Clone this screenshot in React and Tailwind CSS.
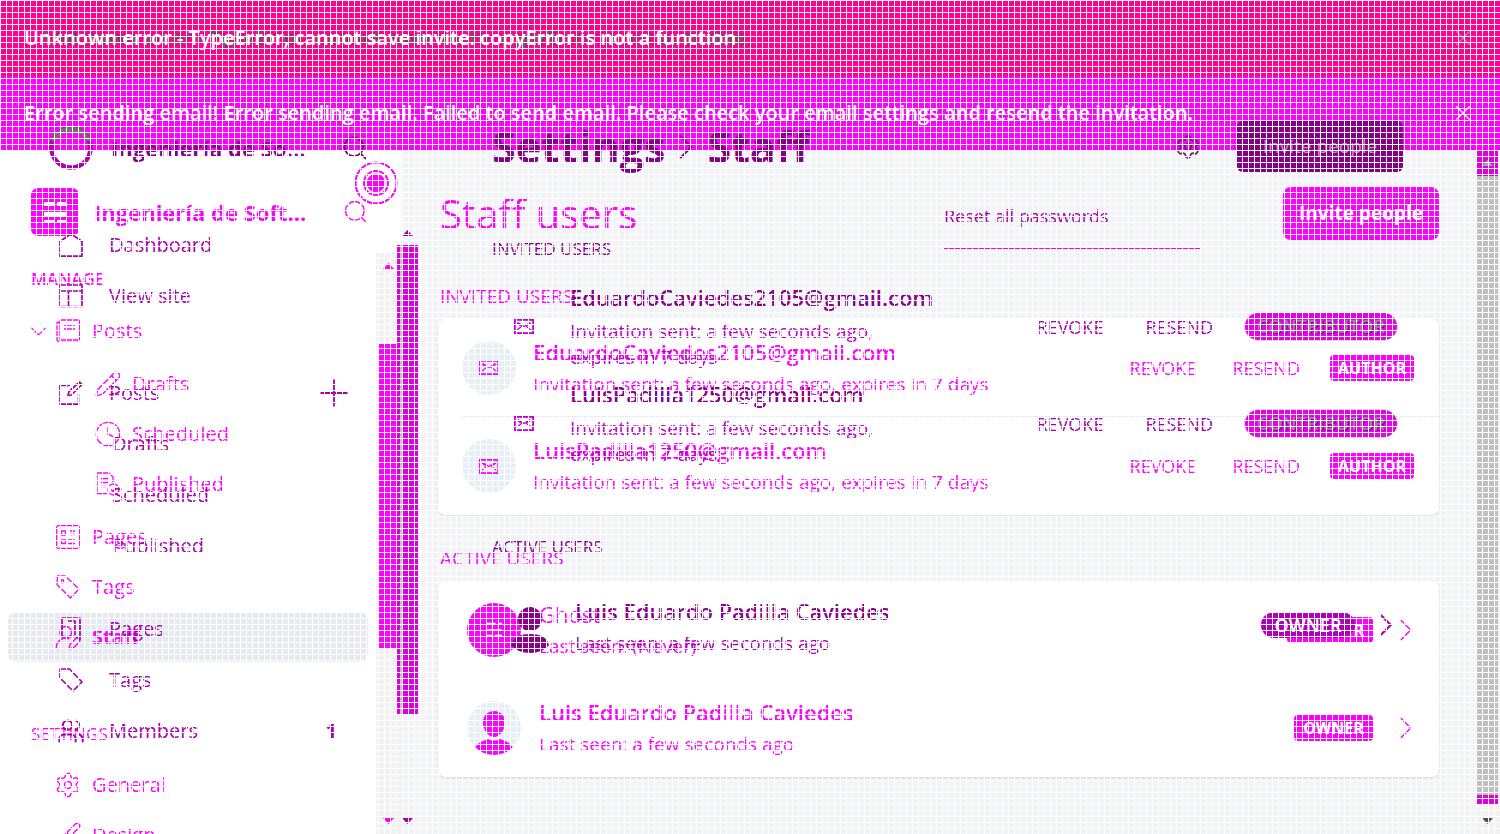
import React from "react";
import { Search, ChevronDown, ChevronRight, X, PencilLine, Plus, Clock, Settings, Users, UserRoundPen, Brush } from "lucide-react";

function drawing(children) {
  return function Drawing({ strokeWidth = 1.3, className = "" }) {
    return (
      <svg className={className} width="24" height="24" viewBox="0 0 24 24" fill="none" stroke="currentColor" strokeWidth={strokeWidth} strokeLinejoin="round">
        {children}
      </svg>
    );
  };
}

function enlarged(Icon) {
  return function Enlarged({ strokeWidth = 1.2, className = "" }) {
    return <span className={`-m-0.5 ${className}`}><Icon size={28} strokeWidth={strokeWidth} /></span>;
  };
}

const HouseIcon = drawing(<path d="M1 8.5L12 .8l11 7.7v14.7H1z" />);
const SiteIcon = drawing(<><rect x="1" y="1" width="22" height="21.5" /><path d="M1 7h22M9.5 7v15.5" /></>);
const EditIcon = drawing(<path d="M11 4.5H1v18.7h18.5V13M9 14.5l1-4L20.5 1l2.5 2.5L12.500 14z" />);
const PageIcon = drawing(<><path d="M3 1h18v21.500l-4-3H3z" /><path d="M9 4h7v14" /></>);
const PlainTagIcon = drawing(<path d="M1 1h9.500L23 14l-9 9L1 10z" />);
const TagIcon = drawing(<><path d="M1.500 1H9l14 13-8.500 9L1 9.500z" /><rect x="5" y="5" width="2.500" height="2.500" /></>);
const PostsIcon = drawing(<><rect x="4" y="1" width="19.500" height="20" rx="1" /><path d="M4 3.500H1V21l2 2.400h20M8 6h11M8 10h11" /></>);
const ListIcon = drawing(<><rect x=".7" y=".7" width="22.600" height="22.600" rx="1.500" /><path d="M5.500 6h4v4h-4zM14 6h5M14 9.500h5M5.500 15h4v3.500h-4zM12 15h7M12 18.500h7" /></>);
const PublishedIcon = drawing(<><path d="M11 21.500H1V1h12l4 4v5M5 6.500h8M5 10.500h8M5 14.500h5" /><circle cx="17.500" cy="17.500" r="5.500" /><path d="M15 17.500l2 2 3-3.500" /></>);
const PencilIcon = enlarged(PencilLine);
const ClockIcon = enlarged(Clock);
const GearIcon = enlarged(Settings);
const StaffIcon = enlarged(UserRoundPen);
const BrushIcon = enlarged(Brush);
const MembersIcon = enlarged(Users);

function Envelope({ className = "" }) {
  return (
    <svg className={className} width="20" height="15" viewBox="0 0 20 15" fill="none" stroke="currentColor" strokeWidth="1.8">
      <rect x="0.9" y="0.9" width="18.2" height="13.2" />
      <path d="M3 4l4.5 3.5L3 11M17 4l-4.5 3.5L17 11M4 3.5l6 4 6-4" strokeWidth="1.2" />
    </svg>
  );
}

function Arrow({ down = false, className = "" }) {
  return (
    <svg className={className} width="11" height="6" viewBox="0 0 11 6" fill="currentColor">
      <path d={down ? "M0 0h11L5.5 6z" : "M0 6h11L5.5 0z"} />
    </svg>
  );
}

function Person({ className = "" }) {
  return (
    <svg className={className} width="38" height="46" viewBox="0 0 38 46" fill="currentColor">
      <ellipse cx="19" cy="12" rx="12" ry="12" />
      <path d="M0 38c2-8 9-11 19-11s17 3 19 11c-4 5-11 8-19 8S4 43 0 38z" />
    </svg>
  );
}

function SlimPerson({ className = "" }) {
  return (
    <svg className={className} width="38" height="44" viewBox="0 0 38 44" fill="currentColor">
      <path d="M19 0c7 0 11 5 11 11 0 8-5 15-11 15S8 19 8 11C8 5 12 0 19 0z" />
      <path d="M0 37c3-6 8-7 13-9 4 2 8 2 12 0 5 2 10 3 13 9-4 5-11 7-19 7S4 42 0 37z" />
    </svg>
  );
}

function Banner({ className, closeClass = "", text, under }) {
  return (
    <div role="alert" className={`flex items-center justify-between px-6 text-xl text-white ${className}`}>
      <p className="grid font-semibold">
        {under && <span aria-hidden="true" className="col-start-1 row-start-1 whitespace-nowrap pl-5 text-[#5a5a5a]">{under}</span>}
        <span className="col-start-1 row-start-1 whitespace-nowrap">{text}</span>
      </p>
      <button aria-label="Close" className={closeClass}><X size={26} strokeWidth={1} /></button>
    </div>
  );
}

function NavItem({ children, icon: Icon, sub, active }) {
  return (
    <a href="#" className={`mx-2 flex h-[50px] items-center gap-3 rounded-lg text-xl ${sub ? "pl-[88px]" : "pl-12"} ${active ? "bg-[#e6eaf0] font-bold" : ""}`}>
      <Icon />
      {children}
    </a>
  );
}

function OldNavItem({ children, icon: Icon, extra }) {
  return (
    <a href="#" className={`flex h-[51px] items-center gap-[26px] pr-[50px] text-xl ${Icon ? "pl-[59px]" : "pl-[112px]"}`}>
      {Icon && <Icon strokeWidth={1.7} />}
      <span className="flex-1">{children}</span>
      {extra}
    </a>
  );
}

function Badge({ children, className }) {
  return <span className={`rounded-sm bg-[#ff00ff] text-center text-base leading-[26px] font-bold text-white ${className}`}>{children}</span>;
}

function Invite({ email, line }) {
  return (
    <li className={`flex h-[98px] items-center ${line ? "border-b border-[#e3edf4]" : ""}`}>
      <span className="flex size-[54px] items-center justify-center rounded-full bg-[#e5eff5]"><Envelope /></span>
      <div className="ml-[17px] flex-1">
        <h3 className="text-[22px] leading-8 font-semibold">{email}</h3>
        <p className="text-[19px] leading-8">Invitation sent: a few seconds ago, expires in 7 days</p>
      </div>
      <div className="flex items-center gap-9 pr-[25px] text-lg">
        <button>REVOKE</button>
        <button>RESEND</button>
        <Badge className="-ml-1.5 w-[84px]">AUTHOR</Badge>
      </div>
    </li>
  );
}

function OldInvite({ email }) {
  return (
    <li className="flex h-[97px]">
      <Envelope className="mt-[37px] text-[#c400d0]" />
      <div className="ml-9 w-[350px] text-[19px] leading-[26px] text-[#b800c4]">
        <h3 className="mb-1.5 text-[22px] leading-[30px] font-semibold whitespace-nowrap text-[#8b008b]">{email}</h3>
        <p>Invitation sent: a few seconds ago, expires in 7 days</p>
      </div>
      <div className="mt-[31px] ml-auto flex h-[27px] items-center gap-[42px] pr-[80px] text-lg text-[#a000a8]">
        <button>REVOKE</button>
        <button>RESEND</button>
        <span className="-ml-2.5 w-[152px] rounded-full bg-[#e800e8] text-center text-lg leading-[27px] font-semibold text-[#a878a8] ring-1 ring-[#d8d0d8] [text-shadow:1px_1px_0_#880088]">CONTRIBUTOR</span>
      </div>
    </li>
  );
}

function CurrentPage() {
  return (
    <div className="col-start-1 row-start-1 flex h-screen flex-col overflow-hidden text-[#ff00ff]">
      <Banner className="h-[76px] shrink-0 bg-[#ff0090]" closeClass="text-[#b088c0]" text="Unknown error - TypeError, cannot save invite. copyError is not a function" under="Unknown error - TypeError, cannot save invite. copyError is not available." />
      <Banner className="h-[74px] shrink-0 bg-[#ff00ff]" text="Error sending email! Error sending email. Failed to send email. Please check your email settings and resend the invitation." />
      <div className="flex min-h-0 flex-1">
        <nav className="w-[376px] shrink-0 overflow-hidden bg-white pt-[38px]">
          <div className="flex h-12 items-center pr-1.5 pl-[31px]">
            <svg width="48" height="48" viewBox="0 0 48 48">
              <rect width="48" height="48" rx="7" fill="#ff00ff" />
              <path d="M13 14h10v4H13zM26 14h9v4h-9zM13 24h22v4H13zM13 32h10v3H13zM26 32h9v3h-9z" fill="#fff" />
            </svg>
            <strong className="ml-[15px] flex-1 text-[22px]">Ingeniería de Soft...</strong>
            <button aria-label="Search"><Search size={28} strokeWidth={1.2} /></button>
          </div>
          <h2 className="mt-[31px] mb-[15px] pl-[31px] text-[17px] leading-6 font-semibold">MANAGE</h2>
          <a href="#" className="flex h-[50px] items-center pl-[25px] text-xl">
            <ChevronDown size={27} strokeWidth={1} />
            <PostsIcon className="mr-3 ml-1" />
            Posts
          </a>
          <div className="my-[3px]">
            <NavItem icon={PencilIcon} sub>Drafts</NavItem>
            <NavItem icon={ClockIcon} sub>Scheduled</NavItem>
            <NavItem icon={PublishedIcon} sub>Published</NavItem>
          </div>
          <NavItem icon={ListIcon}>Pages</NavItem>
          <NavItem icon={TagIcon}>Tags</NavItem>
          <NavItem icon={StaffIcon} active>Staff</NavItem>
          <h2 className="mt-[60px] mb-3.5 pl-[31px] text-[17px] leading-6">SETTINGS</h2>
          <NavItem icon={GearIcon}>General</NavItem>
          <NavItem icon={BrushIcon}>Design</NavItem>
        </nav>
        <div className="w-[25px] shrink-0 bg-[#f1f1f1]">
          <div className="h-[103px] bg-white" />
          <div className="flex h-[91px] justify-center pt-2.5"><Arrow /></div>
          <div className="ml-[3px] h-[304px] w-5 bg-[#ff00ff]" />
          <div className="flex justify-center pt-[170px]"><Arrow down /></div>
        </div>
        <main className="flex-1 bg-[#f2f3f6] pt-[37px] pr-[38px] pl-[37px]">
          <header className="flex h-[53px] items-center justify-between">
            <h1 className="pl-0.5 text-[40px] leading-none font-medium">Staff users</h1>
            <button className="h-full w-[156px] rounded-lg bg-[#ff00ff] text-[19px] font-bold text-white">Invite people</button>
          </header>
          <h2 className="mt-[42px] pl-0.5 text-[19px] leading-7">INVITED USERS</h2>
          <ul className="mt-[9px] rounded-lg bg-white pl-6 shadow-sm">
            <Invite email="EduardoCaviedes2105@gmail.com" line />
            <Invite email="LuisPadilla1250@gmail.com" />
          </ul>
          <h2 className="mt-[29px] pl-0.5 text-[19px] leading-7">ACTIVE USERS</h2>
          <ul className="mt-[9px] rounded-lg bg-white pr-5 pl-[29px] shadow-sm">
            <li className="flex h-[98px] items-center">
              <span className="flex size-[54px] items-center justify-center rounded-full bg-[#ff00ff]">
                <svg width="16" height="16" viewBox="0 0 20 18" fill="#fff"><path d="M0 0h12v2H0zM15 0h5v2h-5zM0 8h20v2H0zM0 15h8v2H0zM11 15h9v2h-9z" /></svg>
              </span>
              <div className="ml-[18px] flex-1">
                <h3 className="text-[22px] leading-8">Ghost</h3>
                <p className="text-[19px] leading-8">Last seen: (Never)</p>
              </div>
              <Badge className="w-[86px]">AUTHOR</Badge>
              <ChevronRight size={38} strokeWidth={0.9} className="-mr-1.5 ml-3.5" />
            </li>
            <li className="flex h-[98px] items-center">
              <span className="flex size-[54px] items-end justify-center overflow-hidden rounded-full bg-[#e5eff5]"><SlimPerson /></span>
              <div className="ml-[18px] flex-1">
                <h3 className="text-[22px] leading-8 font-semibold">Luis Eduardo Padilla Caviedes</h3>
                <p className="text-[19px] leading-8">Last seen: a few seconds ago</p>
              </div>
              <Badge className="w-[79px]">OWNER</Badge>
              <ChevronRight size={38} strokeWidth={0.9} className="-mr-1.5 ml-3.5" />
            </li>
          </ul>
        </main>
        <div className="flex w-[23px] shrink-0 flex-col items-center bg-[#f1f1f1] pr-0.5">
          <div className="flex h-[26px] w-full items-center justify-center bg-[#dd00dd] text-[#a8a8a8]"><Arrow /></div>
          <div className="h-[619px] w-full bg-[#c0c0c0]" />
          <div className="h-[9px] w-full bg-[#dd00dd]" />
          <Arrow down className="mt-[14px] text-[#505050]" />
        </div>
      </div>
    </div>
  );
}

function PreviousPage() {
  return (
    <div className="col-start-1 row-start-1 flex h-screen overflow-hidden text-[#a800a8]">
      <nav className="w-[397px] shrink-0 pt-[124px]">
        <div className="mb-[47px] flex h-12 items-center pr-7 pl-[49px]">
          <svg width="44" height="44" viewBox="0 0 44 44" fill="none">
            <circle cx="22" cy="22" r="19.5" stroke="#b000b8" strokeWidth="4.5" />
            <path d="M4 15a19.5 19.5 0 0 1 36 0" stroke="#6a7468" strokeWidth="4.5" />
          </svg>
          <strong className="ml-[18px] flex-1 text-[22px] text-[#8b008b]">Ingeniería de So...</strong>
          <button aria-label="Search previous" className="text-[#70106c]"><Search size={28} strokeWidth={1.6} /></button>
        </div>
        <OldNavItem icon={HouseIcon}>Dashboard</OldNavItem>
        <OldNavItem icon={SiteIcon}>View site</OldNavItem>
        <div className="mt-[46px] mb-8">
          <OldNavItem icon={EditIcon} extra={<Plus size={44} strokeWidth={1} className="-mr-[9px]" />}>Posts</OldNavItem>
          <OldNavItem>Drafts</OldNavItem>
          <OldNavItem>Scheduled</OldNavItem>
          <OldNavItem>Published</OldNavItem>
        </div>
        <OldNavItem icon={PageIcon}>Pages</OldNavItem>
        <OldNavItem icon={PlainTagIcon}>Tags</OldNavItem>
        <OldNavItem icon={MembersIcon} extra={<span className="pr-2.5 font-bold">1</span>}>Members</OldNavItem>
      </nav>
      <div className="w-[21px] shrink-0 pt-[230px]">
        <Arrow className="mx-auto" />
        <div className="mt-[9px] h-[469px] bg-[#dd00dd] pl-[3px]"><div className="h-full w-0.5 bg-[#c0c0c0]" /></div>
        <Arrow down className="mx-auto mt-[104px]" />
      </div>
      <main className="flex-1 pt-[121px] pr-[23px] pl-[74px]">
        <header className="flex h-[51px] items-center pr-[74px]">
          <h1 className="flex items-center text-[43px] leading-none font-bold text-[#850085]">Settings <ChevronRight size={42} strokeWidth={1.2} /> Staff</h1>
          <button aria-label="Options" className="mr-9 ml-auto text-[#70206c]"><Settings size={26} strokeWidth={1.7} /></button>
          <button className="h-full w-[166px] rounded-md bg-[#850085] text-[19px] text-[#c890c8]">Invite people</button>
        </header>
        <div className="mt-[29px] flex h-12 justify-end pr-[277px]">
          <button className="h-full w-64 border-b border-[#e800e8] pb-[18px] text-left text-lg text-[#a800a8]">Reset all passwords</button>
        </div>
        <h2 className="-mt-3 text-[17px] leading-6 text-[#850085]">INVITED USERS</h2>
        <ul className="mt-[21px] pl-[22px]">
          <OldInvite email="EduardoCaviedes2105@gmail.com" />
          <OldInvite email="LuisPadilla1250@gmail.com" />
        </ul>
        <h2 className="mt-[59px] text-[17px] leading-6 text-[#850085]">ACTIVE USERS</h2>
        <div className="mt-[33px] flex h-[70px] items-center pr-[72px] pl-[19px]">
          <Person className="mt-1.5 text-[#8b008b]" />
          <div className="ml-[26px] flex-1">
            <h3 className="text-[22px] leading-8 font-semibold text-[#8b008b]">Luis Eduardo Padilla Caviedes</h3>
            <p className="text-[19px] leading-8">Last seen: a few seconds ago</p>
          </div>
          <span className="mb-1 w-[94px] rounded-full bg-[#b000b8] text-center text-lg leading-[26px] font-semibold text-white">OWNER</span>
          <ChevronRight size={38} strokeWidth={1.4} className="mb-1 ml-3" />
        </div>
      </main>
    </div>
  );
}

export default function App() {
  return (
    <div className="relative grid h-screen overflow-hidden bg-white font-['Open_Sans',sans-serif]">
      <CurrentPage />
      <PreviousPage />
      <svg className="absolute top-[161px] left-[354px]" width="44" height="44" viewBox="0 0 44 44" fill="none" stroke="#ff00ff">
        <circle cx="22" cy="22" r="20.5" strokeWidth="2" />
        <circle cx="22" cy="22" r="12" strokeWidth="2" />
        <circle cx="22" cy="22" r="9" fill="#ff00ff" />
      </svg>
      <div className="pointer-events-none absolute inset-0 bg-[linear-gradient(to_right,#fff_1px,transparent_1px),linear-gradient(#fff_1px,transparent_1px)] bg-[size:6px_6px]" />
    </div>
  );
}
